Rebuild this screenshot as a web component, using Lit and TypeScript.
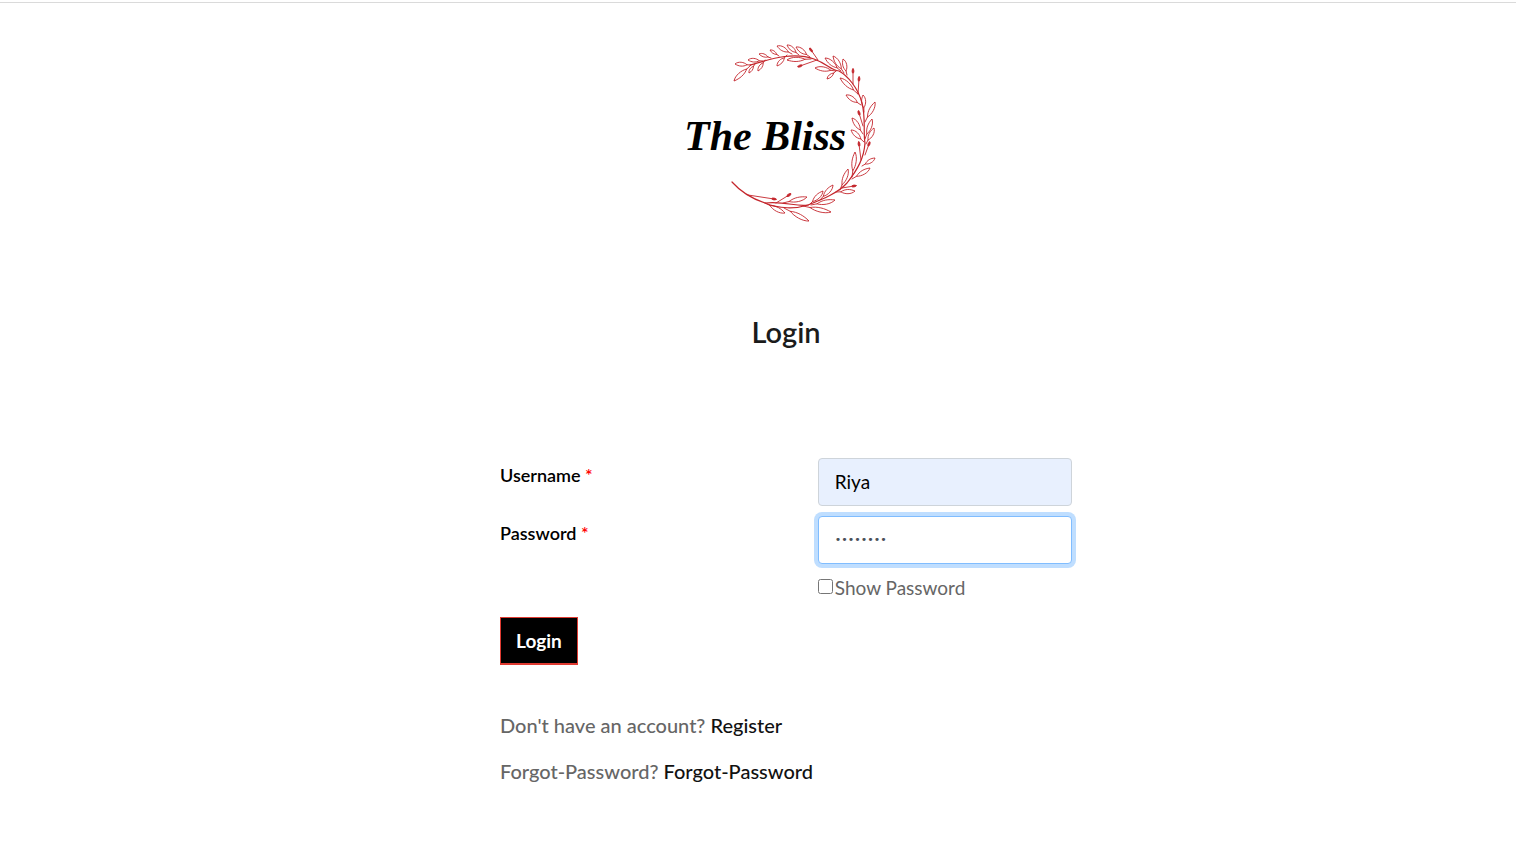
import { LitElement, html, svg, css } from "lit";
import { customElement, state } from "lit/decorators.js";

type Sprig = [number, number, number, number];

// Each sprig runs from its base on the stem to its tip.
const LEAVES: Sprig[] = [
  [751, 65, 734, 81], [751, 65, 735, 64], [763, 61, 748, 60], [755, 64, 749, 73],
  [765, 60, 758, 71], [771, 58, 759, 54], [779, 56, 770, 50], [792, 54, 777, 46],
  [787, 55, 777, 66], [799, 55, 787, 45], [810, 57, 796, 47], [811, 59, 787, 60],
  [836, 71, 815, 68], [836, 71, 827, 79], [841, 71, 825, 58], [844, 73, 833, 56],
  [847, 75, 843, 59], [858, 94, 840, 78], [861, 105, 846, 95], [864, 112, 863, 95],
  [865, 122, 875, 102], [863, 134, 852, 118], [865, 139, 872, 119], [864, 142, 851, 130],
  [866, 144, 874, 128], [862, 166, 875, 158], [852, 177, 855, 152], [852, 179, 870, 168],
  [840, 190, 848, 169], [836, 192, 855, 191], [820, 200, 833, 185], [809, 205, 823, 191],
  [811, 205, 835, 200], [783, 203, 807, 197], [803, 206, 831, 212], [784, 208, 809, 221],
  [765, 203, 785, 213],
];

const BUDS: Sprig[] = [
  [818, 60, 811, 50], [817, 60, 800, 66], [853, 84, 853, 71], [858, 94, 859, 79],
  [863, 126, 859, 113], [861, 160, 859, 144], [865, 155, 869, 144], [842, 188, 854, 186],
  [776, 203, 789, 195], [748, 195, 774, 199],
];

function leaf([x, y, tx, ty]: Sprig) {
  const dx = tx - x, dy = ty - y;
  const len = Math.hypot(dx, dy);
  const half = Math.min(2.8, len * 0.16);
  const nx = (-dy / len) * half, ny = (dx / len) * half;
  const at = (t: number, s: number) =>
    `${(x + dx * t + nx * s).toFixed(1)} ${(y + dy * t + ny * s).toFixed(1)}`;
  return svg`<path d="M${x} ${y}L${at(0.25, 0)}C${at(0.45, 1)} ${at(0.8, 1.2)} ${tx} ${ty}C${at(0.75, -0.8)} ${at(0.5, -1)} ${at(0.25, 0)}" />`;
}

function bud([x, y, tx, ty]: Sprig) {
  const angle = (Math.atan2(ty - y, tx - x) * 180) / Math.PI;
  return svg`<path d="M${x} ${y}L${tx} ${ty}" />
    <ellipse class="bud" cx=${tx} cy=${ty} rx="2.2" ry="0.9" transform="rotate(${angle} ${tx} ${ty})" />`;
}

@customElement("app-root")
export class AppRoot extends LitElement {
  static styles = css`
    :host {
      display: block;
      box-sizing: border-box;
      min-height: 100vh;
      padding-top: 2px;
      background: #fff;
      color: #666;
      font-family: Lato, "Open Sans", sans-serif;
      font-size: 19px;
      line-height: 28px;
    }
    * { box-sizing: border-box; }
    .page {
      border-top: 1px solid #dadada;
      padding: 37px 16px 48px 72px;
    }
    .panel {
      max-width: 572px;
      margin: 0 auto;
    }
    .brand {
      display: flex;
      justify-content: center;
      padding-right: 12px;
    }
    .logo { display: block; width: 200px; height: 186px; }
    .wreath {
      fill: none;
      stroke: #c4262c;
      stroke-width: 0.9;
      stroke-linecap: round;
      stroke-linejoin: round;
    }
    .stem { stroke-width: 1.2; }
    .bud { fill: #c4262c; }
    .wordmark {
      fill: #000;
      font: italic bold 42px "Liberation Serif", serif;
    }
    h1 {
      margin: 86px 0 106px;
      color: #1b1b1b;
      font-size: 29px;
      font-weight: 600;
      line-height: 40px;
      text-align: center;
    }
    .fields {
      display: grid;
      grid-template-columns: minmax(0, 5fr) minmax(0, 4fr);
      row-gap: 10px;
    }
    .label {
      padding-top: 3px;
      color: #000;
      font-size: 18px;
      font-weight: 600;
    }
    .required { color: #f00; }
    .input {
      width: 100%;
      height: 48px;
      padding: 4px 16px 6px;
      border: 1px solid #ced4da;
      border-radius: 4px;
      outline: none;
      background: #fff;
      color: #495057;
      font: inherit;
    }
    .filled { background: #e8f0fe; color: #000; }
    .active {
      border-color: #80bdff;
      box-shadow: 0 0 0 4px #bfdeff;
    }
    .masked { font-family: "DejaVu Sans", sans-serif; font-size: 11px; }
    .show {
      display: flex;
      grid-column: 2;
      align-items: center;
      gap: 2px;
      white-space: nowrap;
    }
    .check { width: 15px; height: 15px; margin: 0 0 4px; }
    .submit {
      display: block;
      height: 48px;
      margin: 15px 0 46px;
      padding: 0 15px;
      border: 1px solid #df3a31;
      border-bottom-width: 2px;
      background: #000;
      color: #fff;
      font: bold 19px/28px Lato, sans-serif;
      cursor: pointer;
    }
    .note {
      margin: 0 0 18px;
      font-size: 20px;
      font-weight: 500;
    }
    a { color: #111; text-decoration: none; }
  `;

  @state() private visible = false;

  private submit(event: Event) {
    event.preventDefault();
  }

  private toggle(event: Event) {
    this.visible = (event.target as HTMLInputElement).checked;
  }

  render() {
    return html`
      <main class="page">
        <div class="panel">
          <div class="brand">
            <svg class="logo" viewBox="680 40 200 186" role="img" aria-label="The Bliss">
              <g class="wreath">
                <path class="stem" d="M750 65C768 60 792 51 814 59C828 64 830 70 839 71C848 76 858 88 862 103C866 119 863 132 865 143C864 158 858 169 847 183C838 193 823 199 808 205C796 207 786 201 765 203" />
                <path class="stem" d="M732 182C740 191 750 198 765 203C779 209 796 209 808 205" />
                ${LEAVES.map(leaf)}
                ${BUDS.map(bud)}
              </g>
              <text class="wordmark" x="684" y="150">The Bliss</text>
            </svg>
          </div>
          <h1>Login</h1>
          <form @submit=${this.submit}>
            <div class="fields">
              <label class="label" for="username">Username <span class="required">*</span></label>
              <input class="input filled" id="username" type="text" value="Riya" />
              <label class="label" for="password">Password <span class="required">*</span></label>
              <input
                class="input active ${this.visible ? "" : "masked"}"
                id="password"
                type=${this.visible ? "text" : "password"}
                value="password"
              />
              <label class="show" for="show">
                <input class="check" id="show" type="checkbox" @change=${this.toggle} />Show Password
              </label>
            </div>
            <button class="submit" type="submit">Login</button>
          </form>
          <p class="note">Don't have an account? <a href="#register">Register</a></p>
          <p class="note">Forgot-Password? <a href="#forgot">Forgot-Password</a></p>
        </div>
      </main>
    `;
  }
}
